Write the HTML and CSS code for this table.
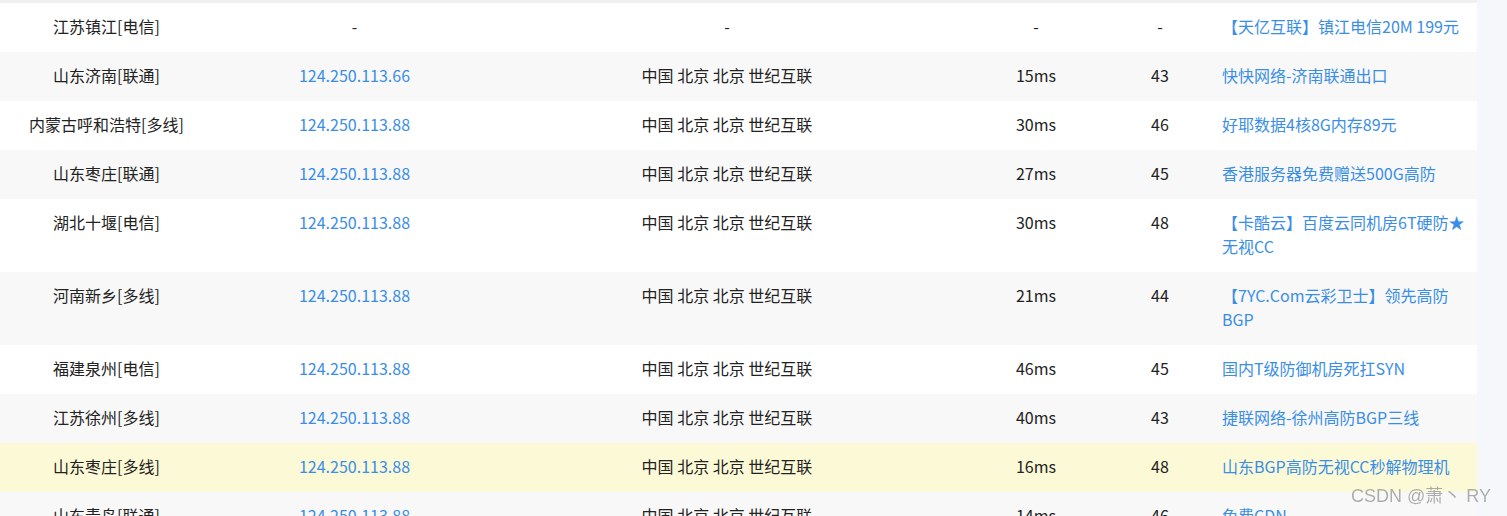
FILE: index.html
```html
<!DOCTYPE html>
<html lang="zh-CN">
<head>
    <meta charset="UTF-8">
    <meta name="viewport" content="width=device-width, initial-scale=1.0">
    <title>Ping 检测结果</title>
    <link rel="stylesheet" href="styles.css">
</head>
<body>

    <div class="result-wrap">
        <table class="ping-table">
            <colgroup>
                <col class="col-node">
                <col class="col-ip">
                <col class="col-loc">
                <col class="col-time">
                <col class="col-ttl">
                <col class="col-ad">
            </colgroup>
            <tbody>
                <tr>
                    <td>江苏镇江[电信]</td>
                    <td>-</td>
                    <td>-</td>
                    <td>-</td>
                    <td>-</td>
                    <td class="ad"><a href="#">【天亿互联】镇江电信20M 199元</a></td>
                </tr>
                <tr>
                    <td>山东济南[联通]</td>
                    <td><a href="#">124.250.113.66</a></td>
                    <td>中国 北京 北京 世纪互联</td>
                    <td>15ms</td>
                    <td>43</td>
                    <td class="ad"><a href="#">快快网络-济南联通出口</a></td>
                </tr>
                <tr>
                    <td>内蒙古呼和浩特[多线]</td>
                    <td><a href="#">124.250.113.88</a></td>
                    <td>中国 北京 北京 世纪互联</td>
                    <td>30ms</td>
                    <td>46</td>
                    <td class="ad"><a href="#">好耶数据4核8G内存89元</a></td>
                </tr>
                <tr>
                    <td>山东枣庄[联通]</td>
                    <td><a href="#">124.250.113.88</a></td>
                    <td>中国 北京 北京 世纪互联</td>
                    <td>27ms</td>
                    <td>45</td>
                    <td class="ad"><a href="#">香港服务器免费赠送500G高防</a></td>
                </tr>
                <tr>
                    <td>湖北十堰[电信]</td>
                    <td><a href="#">124.250.113.88</a></td>
                    <td>中国 北京 北京 世纪互联</td>
                    <td>30ms</td>
                    <td>48</td>
                    <td class="ad"><a href="#">【卡酷云】百度云同机房6T硬防★无视CC</a></td>
                </tr>
                <tr>
                    <td>河南新乡[多线]</td>
                    <td><a href="#">124.250.113.88</a></td>
                    <td>中国 北京 北京 世纪互联</td>
                    <td>21ms</td>
                    <td>44</td>
                    <td class="ad"><a href="#">【7YC.Com云彩卫士】领先高防BGP</a></td>
                </tr>
                <tr>
                    <td>福建泉州[电信]</td>
                    <td><a href="#">124.250.113.88</a></td>
                    <td>中国 北京 北京 世纪互联</td>
                    <td>46ms</td>
                    <td>45</td>
                    <td class="ad"><a href="#">国内T级防御机房死扛SYN</a></td>
                </tr>
                <tr>
                    <td>江苏徐州[多线]</td>
                    <td><a href="#">124.250.113.88</a></td>
                    <td>中国 北京 北京 世纪互联</td>
                    <td>40ms</td>
                    <td>43</td>
                    <td class="ad"><a href="#">捷联网络-徐州高防BGP三线</a></td>
                </tr>
                <tr class="is-hover">
                    <td>山东枣庄[多线]</td>
                    <td><a href="#">124.250.113.88</a></td>
                    <td>中国 北京 北京 世纪互联</td>
                    <td>16ms</td>
                    <td>48</td>
                    <td class="ad"><a href="#">山东BGP高防无视CC秒解物理机</a></td>
                </tr>
                <tr>
                    <td>山东青岛[联通]</td>
                    <td><a href="#">124.250.113.88</a></td>
                    <td>中国 北京 北京 世纪互联</td>
                    <td>14ms</td>
                    <td>46</td>
                    <td class="ad"><a href="#">免费CDN</a></td>
                </tr>
            </tbody>
        </table>
    </div>

    <div class="watermark">CSDN @萧丶 RY</div>

</body>
</html>
```

FILE: styles.css
```css
html, body {
    margin: 0;
    height: 100%;
    overflow: hidden;
}
body {
    background: linear-gradient(to right, #eef2f8, #f5f7fb);
    font-family: "Noto Sans CJK SC", "Noto Sans", sans-serif;
    font-size: 16px;
    color: #222;
}
.result-wrap {
    width: 1477px;
    background-color: #fff;
    border-top: 3px solid #f0f0f0;
}
.ping-table {
    width: 100%;
    border-collapse: collapse;
    table-layout: fixed;
}
.col-node { width: 213px; }
.col-ip   { width: 283px; }
.col-loc  { width: 462px; }
.col-time { width: 156px; }
.col-ttl  { width: 92px; }
.col-ad   { width: 271px; }

.ping-table td {
    padding: 11px 0 14px;
    line-height: 24px;
    text-align: center;
    vertical-align: top;
}
.ping-table tr:nth-child(even) {
    background-color: #f8f8f8;
}
/* строка под курсором */
.ping-table tr.is-hover {
    background-color: #fcf9d6;
}
.ping-table a {
    color: #3a8ee6;
    text-decoration: none;
}
.ping-table td.ad {
    text-align: left;
    padding-left: 16px;
    padding-right: 8px;
}
.watermark {
    position: fixed;
    right: 16px;
    bottom: 9px;
    font-family: "Liberation Sans", Arial, "Noto Sans CJK SC", sans-serif;
    font-size: 18px;
    color: rgba(0, 0, 0, 0.32);
    text-shadow: 0 0 2px rgba(255, 255, 255, 0.8);
}
```
